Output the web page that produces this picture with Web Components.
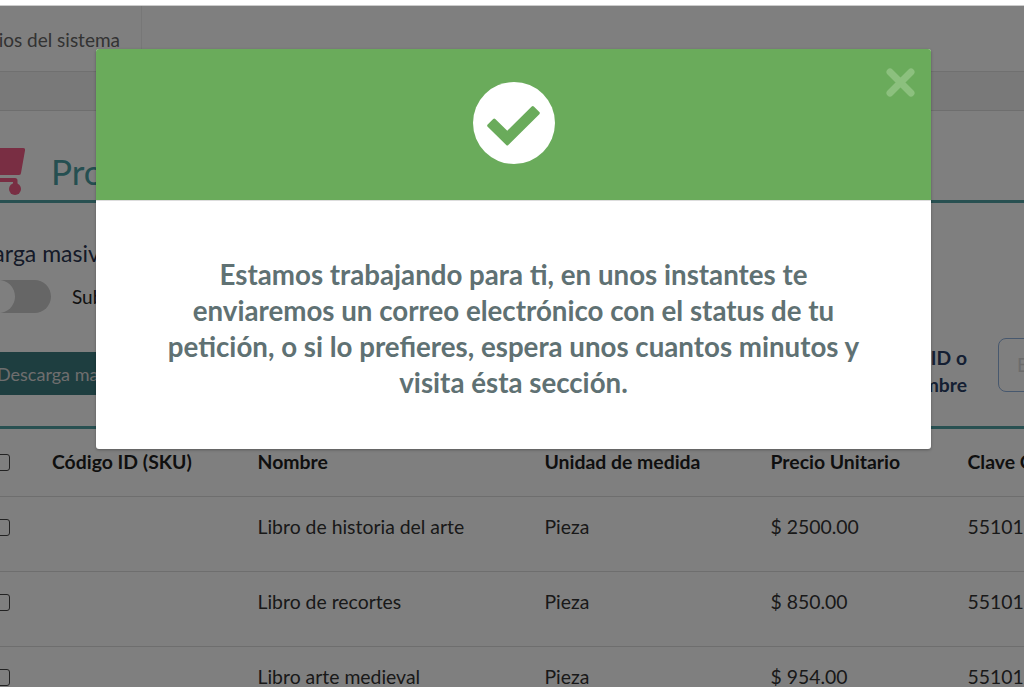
<!DOCTYPE html>
<html lang="es">
<head>
<meta charset="utf-8">
<title>Productos</title>
<style>
  html, body { margin: 0; height: 100%; overflow: hidden; background: #fff; }
  body { font-family: Lato, "Liberation Sans", sans-serif; }
</style>
</head>
<body>
<app-page>
  <tab-bar label="Usuarios del sistema"></tab-bar>
  <page-title label="Productos"></page-title>
  <bulk-upload></bulk-upload>
  <product-toolbar></product-toolbar>
  <product-table>
    <product-row name="Libro de historia del arte" unit="Pieza" price="$ 2500.00" code="55101"></product-row>
    <product-row name="Libro de recortes" unit="Pieza" price="$ 850.00" code="55101"></product-row>
    <product-row name="Libro arte medieval" unit="Pieza" price="$ 954.00" code="55101"></product-row>
  </product-table>
  <status-modal slot="modal">Estamos trabajando para ti, en unos instantes te enviaremos un correo electrónico con el status de tu petición, o si lo prefieres, espera unos cuantos minutos y visita ésta sección.</status-modal>
</app-page>

<script>
function shadow(el, html) {
  el.attachShadow({ mode: "open" }).innerHTML = html;
}

class AppPage extends HTMLElement {
  constructor() {
    super();
    shadow(this, `
<style>
:host { display: block; height: 100vh; background: #fff; box-sizing: border-box; padding-top: 5px; }
.stage { position: relative; height: 100%; overflow: hidden; background: #fff; border-top: 1px solid #ccc; box-sizing: border-box; }
.content { width: 1124px; margin-left: -30px; display: flex; flex-direction: column; }
.overlay { position: absolute; inset: 0; background: rgba(0,0,0,.5); padding: 43px 0 0 96px; }
</style>
<div class="stage">
  <div class="content"><slot></slot></div>
  <div class="overlay"><slot name="modal"></slot></div>
</div>`);
  }
}

class TabBar extends HTMLElement {
  constructor() {
    super();
    shadow(this, `
<style>
:host { display: block; font-size: 19px; color: #666; }
.tabs { display: flex; height: 65px; border-bottom: 1px solid #e0e0e0; }
.tab { width: 172px; box-sizing: border-box; border-right: 1px solid #eee; overflow: hidden;
  display: flex; justify-content: flex-end; align-items: flex-end; padding: 0 21px 20px 0; white-space: nowrap; }
.sub { height: 38px; background: #f2f2f2; border-bottom: 1px solid #ddd; }
</style>
<div class="tabs"><div class="tab">${this.getAttribute("label")}</div></div>
<div class="sub"></div>`);
  }
}

class PageTitle extends HTMLElement {
  constructor() {
    super();
    shadow(this, `
<style>
:host { display: flex; align-items: flex-start; height: 89px; border-bottom: 3px solid #50a0a2; }
svg { width: 60px; height: 52px; margin-top: 34px; flex: none; display: block; margin-left: -5px; }
h1 { margin: 38px 0 0 26px; font-size: 35px; line-height: 44px; font-weight: 400; color: #4a9ea2; }
</style>
<svg viewBox="0 0 60 52">
  <path fill="#f25c86" d="M15 3H58a2 2 0 0 1 2 2.4L56 28a2 2 0 0 1-2 2H15z"/>
  <path fill="#f25c86" d="M15 33H50a2.5 2.5 0 0 1 2.5 2.5V41H48V37H15z"/>
  <circle cx="50" cy="44" r="6" fill="#f25c86"/>
</svg>
<h1>${this.getAttribute("label")}</h1>`);
  }
}

class BulkUpload extends HTMLElement {
  constructor() {
    super();
    shadow(this, `
<style>
:host { display: block; padding-top: 36px; height: 115px; box-sizing: border-box; color: #2a3550; }
.title { font-size: 23px; line-height: 28px; margin-left: 8px; }
.row { display: flex; align-items: center; gap: 21px; margin-top: 13px; font-size: 19px; color: #222; }
.toggle { width: 81px; height: 33px; border-radius: 17px; background: #ccc; display: flex; position: relative; }
.toggle::before { content: ""; width: 33px; height: 33px; margin-left: 12px; border-radius: 50%; background: #fff; }
</style>
<div class="title">Carga masiva</div>
<div class="row"><span class="toggle"></span><span>Subir archivo</span></div>`);
  }
}

class ProductToolbar extends HTMLElement {
  constructor() {
    super();
    shadow(this, `
<style>
:host { display: flex; align-items: flex-start; height: 111px; box-sizing: border-box; padding-top: 34px;
  border-bottom: 3px solid #50a0a2; }
.btn { width: 260px; height: 43px; padding-left: 27px; box-sizing: border-box; background: #3d7c80; color: #ddd; font-size: 18px;
  display: flex; align-items: center; border-radius: 3px; white-space: nowrap; }
.search { margin-left: auto; display: flex; align-items: flex-start; margin-top: -14px; }
.label { text-align: right; font-weight: 700; font-size: 19.3px; line-height: 27px; color: #2a3f66; margin: 6px 31px 0 0; }
.input { width: 76px; height: 52px; border: 1px solid #8fb0dc; border-radius: 8px; color: #d8d8d8; font-size: 19px;
  padding-left: 18px; line-height: 52px; background: #fff; }
</style>
<div class="btn">Descarga masiva de productos</div>
<div class="search">
  <div class="label">Buscar por ID o<br>nombre</div>
  <div class="input">Ej</div>
</div>`);
  }
}

const COLUMNS = "82px 205.5px 287px 226px 197px 1fr";

class ProductTable extends HTMLElement {
  constructor() {
    super();
    shadow(this, `
<style>
:host { display: block; font-size: 19.4px; }
.head { display: grid; grid-template-columns: ${COLUMNS}; height: 68px; align-items: start; padding-top: 22px; box-sizing: border-box;
  font-weight: 700; color: #1e1e1e; border-bottom: 1px solid #ddd; line-height: 22px; white-space: nowrap; }
.box { width: 13px; height: 15px; border: 1px solid #444; border-radius: 3px; margin: 3px 0 0 25px; background: #fff; }
</style>
<div class="head">
  <div><div class="box"></div></div>
  <div>Código ID (SKU)</div><div>Nombre</div><div>Unidad de medida</div><div>Precio Unitario</div><div>Clave Catálogo</div>
</div>
<slot></slot>`);
  }
}

class ProductRow extends HTMLElement {
  constructor() {
    super();
    const a = (n) => this.getAttribute(n);
    shadow(this, `
<style>
:host { display: grid; grid-template-columns: ${COLUMNS}; height: 75px; box-sizing: border-box; padding-top: 19px;
  border-bottom: 1px solid #ddd; color: #333; line-height: 22px; }
.box { width: 13px; height: 15px; border: 1px solid #444; border-radius: 3px; margin: 3px 0 0 25px; background: #fff; }
</style>
<div><div class="box"></div></div>
<div></div><div>${a("name")}</div><div>${a("unit")}</div><div>${a("price")}</div><div>${a("code")}</div>`);
  }
}

class StatusModal extends HTMLElement {
  constructor() {
    super();
    shadow(this, `
<style>
:host { display: block; position: relative; width: 835px; height: 400px; background: #fff; border-radius: 3px;
  overflow: hidden; box-shadow: 0 1px 3px rgba(0,0,0,.3); }
.top { height: 151px; background: #6aab5b; border-bottom: 1px solid #ddd; display: flex; align-items: center; justify-content: center; }
.top svg.check { width: 82px; height: 82px; display: block; margin: -3px 0 0 0; }
.close { position: absolute; top: 19px; right: 16px; width: 29px; height: 29px; display: block; }
.body { padding: 56px 60px 0; text-align: center; font-size: 27.7px; line-height: 36px; font-weight: 700; color: #5f7173; }
</style>
<div class="top">
  <svg class="check" viewBox="0 0 83 83">
    <circle cx="41.5" cy="41.5" r="41.5" fill="#fff"/>
    <polygon fill="#6aab5b" stroke="#6aab5b" stroke-width="3" stroke-linejoin="round"
      points="21.5,38.6 15.9,44.2 34.7,62.6 66.1,31.5 60.5,25.9 34.7,51.4"/>
  </svg>
</div>
<svg class="close" viewBox="0 0 29 29">
  <path d="M4 4 25 25M25 4 4 25" stroke="#8cc07e" stroke-width="7" stroke-linecap="round" fill="none"/>
</svg>
<div class="body"><slot></slot></div>`);
  }
}

customElements.define("app-page", AppPage);
customElements.define("tab-bar", TabBar);
customElements.define("page-title", PageTitle);
customElements.define("bulk-upload", BulkUpload);
customElements.define("product-toolbar", ProductToolbar);
customElements.define("product-table", ProductTable);
customElements.define("product-row", ProductRow);
customElements.define("status-modal", StatusModal);
</script>
</body>
</html>
